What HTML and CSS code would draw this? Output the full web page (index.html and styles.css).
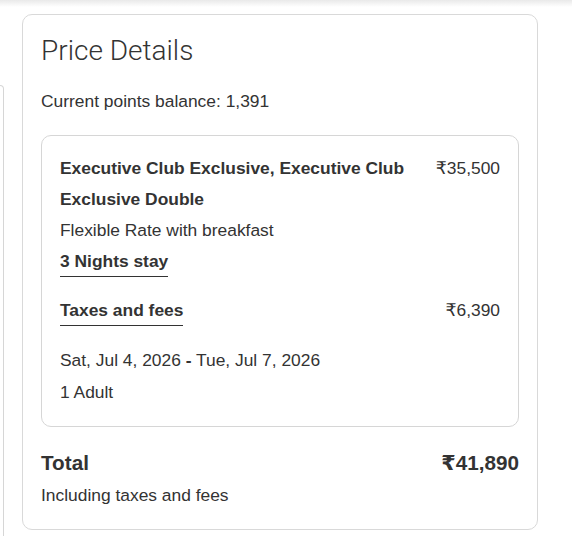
FILE: index.html
```html
<!DOCTYPE html>
<html lang="en">
<head>
<meta charset="UTF-8" />
<meta name="viewport" content="width=device-width, initial-scale=1.0" />
<title>Price Details</title>
<link rel="stylesheet" href="styles.css">
</head>
<body>

<div class="topbar"></div>

<div class="page">
  <!-- left card, mostly off screen -->
  <div class="side-card"></div>

  <div class="price-card">
    <h2>Price Details</h2>
    <p class="points">Current points balance: 1,391</p>

    <div class="stay-box">
      <div class="row">
        <div class="room-name">Executive Club Exclusive, Executive Club Exclusive Double</div>
        <div class="amount">₹35,500</div>
      </div>
      <div class="rate">Flexible Rate with breakfast</div>
      <div class="nights"><span class="underlined">3 Nights stay</span></div>

      <div class="row taxes">
        <span class="underlined">Taxes and fees</span>
        <div class="amount">₹6,390</div>
      </div>

      <div class="dates">Sat, Jul 4, 2026 <b>-</b> Tue, Jul 7, 2026</div>
      <div class="guests">1 Adult</div>
    </div>

    <div class="total-row">
      <span>Total</span>
      <span>₹41,890</span>
    </div>
    <p class="note">Including taxes and fees</p>
  </div>
</div>

</body>
</html>
```

FILE: styles.css
```css
body {
  font-family: "Liberation Sans", Arial, "DejaVu Sans", sans-serif;
  color: #333;
  margin: 0;
  padding: 0;
  background: #fff;
}
.topbar {
  height: 7px;
  background: linear-gradient(#e9e9e9, #fff);
}
.page {
  display: flex;
  align-items: flex-start;
  padding-top: 7px;
}
.side-card {
  width: 3px;
  height: 460px;
  margin-top: 71px;
  margin-right: 18px;
  border: 1px solid #d6d6d6;
  border-left: none;
  border-radius: 0 10px 10px 0;
}
.price-card {
  width: 516px;
  box-sizing: border-box;
  border: 1px solid #d9d9d9;
  border-radius: 10px;
  padding: 17px 18px 24px 18px;
}
h2 {
  font-family: Roboto, "Liberation Sans", sans-serif;
  font-weight: 300;
  font-size: 28px;
  margin: 0;
  line-height: 38px;
}
.points {
  font-size: 17.4px;
  margin: 21px 0 24px;
  line-height: 20px;
}
.stay-box {
  border: 1px solid #d6d6d6;
  border-radius: 10px;
  padding: 17px 18px 18px 18px;
  font-size: 17.4px;
  line-height: 31px;
}
.row {
  display: flex;
  justify-content: space-between;
  align-items: flex-start;
  gap: 20px;
}
.room-name {
  flex: 1;
  font-weight: bold;
}
.amount {
  white-space: nowrap;
}
.underlined {
  font-weight: bold;
  border-bottom: 1px solid #333;
  line-height: 20px;
  padding-bottom: 5px;
}
.nights {
  display: flex;
  margin-top: 5px;
}
.taxes {
  margin-top: 23px;
  line-height: 20px;
}
.dates {
  margin-top: 18px;
  line-height: 32px;
}
.guests {
  line-height: 32px;
}
.total-row {
  display: flex;
  justify-content: space-between;
  font-weight: bold;
  font-size: 20.7px;
  margin-top: 24px;
  line-height: 24px;
}
.note {
  font-size: 17.4px;
  margin: 10px 0 0;
  line-height: 20px;
}
```
